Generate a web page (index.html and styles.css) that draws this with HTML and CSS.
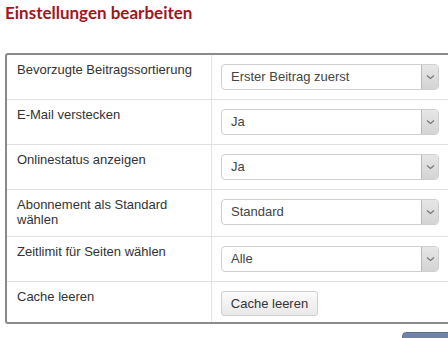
FILE: index.html
```html
<!DOCTYPE html>
<html>
<head>
  <title>Einstellungen bearbeiten</title>
  <link rel="stylesheet" href="styles.css">
</head>
<body>
<div class="page">
  <h1 class="page-title">Einstellungen bearbeiten</h1>

  <form class="settings-form">
    <div class="settings-box">
      <table class="settings">
        <tr>
          <td class="label">Bevorzugte Beitragssortierung</td>
          <td class="field">
            <div class="select"><span class="select-text">Erster Beitrag zuerst</span><span class="select-arrow"><svg width="9" height="6" viewBox="0 0 9 6"><path d="M1 1.5 L4.5 4.5 L8 1.5" fill="none" stroke="#777" stroke-width="1.2"/></svg></span></div>
          </td>
        </tr>
        <tr>
          <td class="label">E-Mail verstecken</td>
          <td class="field">
            <div class="select"><span class="select-text">Ja</span><span class="select-arrow"><svg width="9" height="6" viewBox="0 0 9 6"><path d="M1 1.5 L4.5 4.5 L8 1.5" fill="none" stroke="#777" stroke-width="1.2"/></svg></span></div>
          </td>
        </tr>
        <tr>
          <td class="label">Onlinestatus anzeigen</td>
          <td class="field">
            <div class="select"><span class="select-text">Ja</span><span class="select-arrow"><svg width="9" height="6" viewBox="0 0 9 6"><path d="M1 1.5 L4.5 4.5 L8 1.5" fill="none" stroke="#777" stroke-width="1.2"/></svg></span></div>
          </td>
        </tr>
        <tr>
          <td class="label">Abonnement als Standard wählen</td>
          <td class="field">
            <div class="select"><span class="select-text">Standard</span><span class="select-arrow"><svg width="9" height="6" viewBox="0 0 9 6"><path d="M1 1.5 L4.5 4.5 L8 1.5" fill="none" stroke="#777" stroke-width="1.2"/></svg></span></div>
          </td>
        </tr>
        <tr>
          <td class="label">Zeitlimit für Seiten wählen</td>
          <td class="field">
            <div class="select"><span class="select-text">Alle</span><span class="select-arrow"><svg width="9" height="6" viewBox="0 0 9 6"><path d="M1 1.5 L4.5 4.5 L8 1.5" fill="none" stroke="#777" stroke-width="1.2"/></svg></span></div>
          </td>
        </tr>
        <tr class="last">
          <td class="label">Cache leeren</td>
          <td class="field field-button">
            <button type="button" class="btn">Cache leeren</button>
          </td>
        </tr>
      </table>
    </div>

    <div class="actions">
      <button type="submit" class="btn-primary" aria-label="Speichern"></button>
    </div>
  </form>
</div>
</body>
</html>
```

FILE: styles.css
```css
/* Einstellungen */
body {
  margin: 0;
  font-family: "Liberation Sans", Arial, sans-serif;
  font-size: 13px;
  color: #333;
  background: #fff;
}

.page {
  width: 448px;
  height: 338px;
  overflow: hidden;
}

.page-title {
  margin: 0;
  padding: 3px 0 0 5px;
  height: 20px;
  font-family: Lato, "Open Sans", sans-serif;
  font-size: 17px;
  font-weight: bold;
  line-height: 20px;
  color: #a3161d;
}

.settings-form {
  width: 470px;
  margin: 30px 0 0 5px;
}

.settings-box {
  border: 2px solid #8b8b8b;
  border-right: none;
  border-radius: 3px 0 0 3px;
}

.settings {
  width: 100%;
  border-collapse: collapse;
}

.settings td {
  border-bottom: 1px solid #e0e0e0;
  vertical-align: top;
}

.settings tr.last td {
  border-bottom: none;
}

.label {
  width: 194px;
  padding: 7px 0 9px 10px;
  line-height: 15px;
  border-right: 1px solid #e3e3e3;
}

.field {
  padding: 9px 0 9px 9px;
}

.field-button {
  padding-bottom: 6px;
}

.select {
  display: flex;
  width: 218px;
  height: 26px;
  box-sizing: border-box;
  border: 1px solid #cfcfcf;
  border-radius: 4px;
  background: #fff;
  overflow: hidden;
}

.select-text {
  flex: 1;
  padding-left: 9px;
  line-height: 24px;
  color: #444;
}

.select-arrow {
  display: flex;
  align-items: center;
  justify-content: center;
  width: 16px;
  border-left: 1px solid #b9b9b9;
  background: linear-gradient(#e6e6e6, #d4d4d4);
}

.btn {
  display: block;
  width: 97px;
  height: 25px;
  padding: 0;
  font-family: "Liberation Sans", Arial, sans-serif;
  font-size: 13px;
  color: #333;
  border: 1px solid #cfcfcf;
  border-radius: 3px;
  background: linear-gradient(#fbfbfb, #e8e8e8);
}

.actions {
  display: flex;
  justify-content: flex-end;
  margin-top: 8px;
}

.btn-primary {
  width: 73px;
  height: 26px;
  border: 1px solid #5d6f92;
  border-radius: 4px;
  background: linear-gradient(#7185a8, #5f7397);
}
```
